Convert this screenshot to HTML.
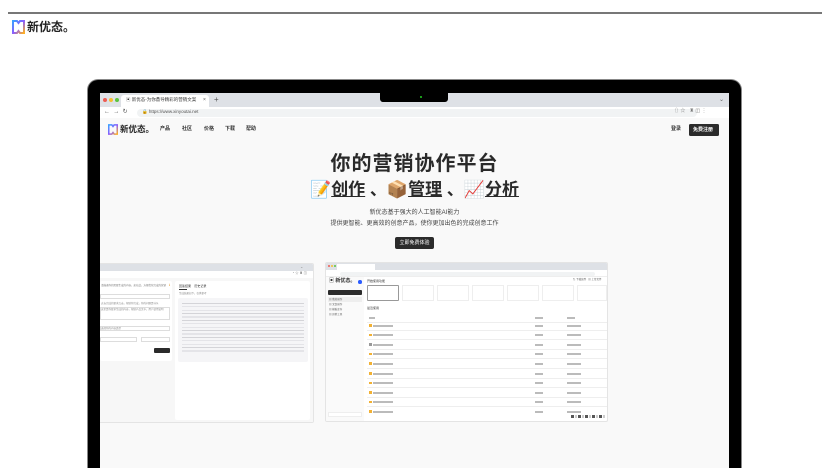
<!DOCTYPE html>
<html style="width:830px;height:468px;overflow:hidden"><head><meta charset="utf-8"><style>
*{margin:0;padding:0;box-sizing:border-box}
body{width:830px;height:468px;overflow:hidden;background:#fff;font-family:"Liberation Sans","Noto Sans CJK SC",sans-serif;position:relative;color:#222}
.a{position:absolute}
.t{position:absolute;white-space:nowrap;line-height:1}
.r{position:absolute;left:0;width:240px;height:9.6px;border-bottom:.5px solid #eee}
.r i{position:absolute;top:3.5px;height:2px;background:#bbb}
.r b{position:absolute;left:2px;top:3px;width:2.5px;height:2.5px;background:#f2b134}
</style></head><body>
<div class="a" style="left:8px;top:12px;width:814px;height:1.5px;background:#777"></div>
<svg class="a" style="left:12px;top:20px" width="13" height="14" viewBox="0 0 13 14"><defs><linearGradient id="g" x1="0" y1="0" x2="1" y2="1"><stop offset="0" stop-color="#3aa0ff"/><stop offset=".5" stop-color="#8a5cff"/><stop offset="1" stop-color="#ffb020"/></linearGradient></defs><path d="M1 1h4l1.5 2L8 1h4v12H8L6.5 11 5 13H1z" fill="none" stroke="url(#g)" stroke-width="2"/></svg>
<div class="t" style="left:27px;top:21px;font-size:12px;font-weight:bold;color:#222">新优态。</div>

<div class="a" style="left:87px;top:79px;width:655px;height:389px;background:#000;border-radius:11px 11px 0 0;border:1px solid #888;border-bottom:none"></div>
<div class="a" style="left:100px;top:93px;width:629px;height:375px;background:#f9f9f9;overflow:hidden">
  <div class="a" style="left:0;top:0;width:629px;height:14px;background:#dee1e6"></div>
  <div class="a" style="left:3px;top:5px;width:4px;height:4px;border-radius:50%;background:#ee5c54"></div>
  <div class="a" style="left:9px;top:5px;width:4px;height:4px;border-radius:50%;background:#f6be2f"></div>
  <div class="a" style="left:15px;top:5px;width:4px;height:4px;border-radius:50%;background:#5ac43f"></div>
  <div class="a" style="left:21px;top:2px;width:88px;height:12px;background:#fff;border-radius:3px 3px 0 0"></div>
  <div class="t" style="left:26px;top:5px;font-size:4.5px;color:#333">▣ 新优态-为你鼎导精彩的营销文案</div>
  <div class="t" style="left:103px;top:5px;font-size:5px;color:#555">×</div>
  <div class="t" style="left:114px;top:3px;font-size:8px;color:#555">+</div>
  <div class="t" style="left:619px;top:4px;font-size:6px;color:#666">⌄</div>
  <div class="a" style="left:280px;top:0;width:68px;height:9px;background:#000;border-radius:0 0 3px 3px"></div>
  <div class="a" style="left:320px;top:3px;width:2px;height:2px;border-radius:50%;background:#2c2"></div>
  <div class="a" style="left:0;top:14px;width:629px;height:11px;background:#fff"></div>
  <div class="t" style="left:4px;top:16px;font-size:6px;color:#555">←&nbsp; →&nbsp; ↻</div>
  <div class="a" style="left:37px;top:15.5px;width:560px;height:8px;background:#f1f3f4;border-radius:4px"></div>
  <div class="t" style="left:42px;top:17px;font-size:4.5px;color:#555">🔒 https://www.xinyoutai.net</div>
  <div class="t" style="left:574px;top:16px;font-size:5px;color:#777">⇧ ☆ &nbsp; ♜ ◫ ⋮</div>
  <svg class="a" style="left:8px;top:31px" width="10" height="11" viewBox="0 0 13 14"><path d="M1 1h4l1.5 2L8 1h4v12H8L6.5 11 5 13H1z" fill="none" stroke="url(#g)" stroke-width="2"/></svg>
  <div class="t" style="left:20px;top:32px;font-size:8.5px;font-weight:bold;color:#222">新优态。</div>
  <div class="t" style="left:60px;top:34px;font-size:5px;font-weight:bold;color:#333">产品</div>
  <div class="t" style="left:82px;top:34px;font-size:5px;font-weight:bold;color:#333">社区</div>
  <div class="t" style="left:104px;top:34px;font-size:5px;font-weight:bold;color:#333">价格</div>
  <div class="t" style="left:125px;top:34px;font-size:5px;font-weight:bold;color:#333">下载</div>
  <div class="t" style="left:146px;top:34px;font-size:5px;font-weight:bold;color:#333">帮助</div>
  <div class="t" style="left:571px;top:34px;font-size:5px;font-weight:bold;color:#333">登录</div>
  <div class="a" style="left:589px;top:31px;width:30px;height:12px;background:#2b2b2b;border-radius:1.5px"></div>
  <div class="t" style="left:593px;top:34.5px;font-size:5px;font-weight:bold;color:#fff">免费注册</div>
  <div class="t" style="left:0;width:629px;text-align:center;top:61px;font-size:20px;font-weight:bold;color:#2a2a2a;letter-spacing:1px">你的营销协作平台</div>
  <div class="t" style="left:0;width:629px;text-align:center;top:88px;font-size:17px;font-weight:bold;color:#2a2a2a">📝<u>创作</u> 、📦<u>管理</u> 、📈<u>分析</u></div>
  <div class="t" style="left:0;width:629px;text-align:center;top:117px;font-size:6px;color:#444">新优态基于强大的人工智能AI能力</div>
  <div class="t" style="left:0;width:629px;text-align:center;top:128px;font-size:6px;color:#444">提供更智能、更高效的创意产品，使你更加出色的完成创意工作</div>
  <div class="a" style="left:295px;top:144px;width:39px;height:12px;background:#2b2b2b;border-radius:2px"></div>
  <div class="t" style="left:295px;width:39px;text-align:center;top:147.5px;font-size:5px;color:#fff">立即免费体验</div>

  <div class="a" style="left:0;top:170px;width:214px;height:160px;background:#fff;border:1px solid #e4e4e4;border-left:none;border-radius:0 2px 2px 0;overflow:hidden">
    <div class="a" style="left:0;top:0;width:214px;height:7px;background:#dee1e6"></div>
    <div class="t" style="left:200px;top:1px;font-size:4px;color:#888">⌄</div>
    <div class="a" style="left:0;top:7px;width:214px;height:7px;background:#fff"></div>
    <div class="t" style="left:192px;top:8px;font-size:3.5px;color:#777">◔ ☆ ♜ ◫</div>
    <div class="a" style="left:0;top:14px;width:214px;height:146px;background:#f7f7f7"></div>
    <div class="a" style="left:0;top:17px;width:72px;height:80px;background:#fff;border-radius:2px"></div>
    <div class="t" style="left:1px;top:21px;font-size:2.5px;color:#777">请描述你的需要生成的内容，如在此，方便优化完成的营销</div>
    <div class="t" style="left:69px;top:20px;font-size:3px;color:#e9a23b">ℹ</div>
    <div class="a" style="left:0;top:30px;width:70px;height:5px;border:.5px solid #ddd"></div>
    <div class="t" style="left:1px;top:39px;font-size:2.5px;color:#888">过去完成的要求点击，帮助你完成，你的问题是什么</div>
    <div class="a" style="left:0;top:43px;width:70px;height:13px;border:.5px solid #ddd"></div>
    <div class="t" style="left:1px;top:45px;font-size:2.5px;color:#888">这里是你要求生成的内容，帮助产品文字，用户使用说明</div>
    <div class="a" style="left:0;top:62px;width:70px;height:5px;border:.5px solid #ddd"></div>
    <div class="t" style="left:1px;top:63.5px;font-size:2.5px;color:#888">选择你的内容类型</div>
    <div class="a" style="left:0;top:73px;width:37px;height:5px;border:.5px solid #ddd"></div>
    <div class="a" style="left:41px;top:73px;width:29px;height:5px;border:.5px solid #ddd"></div>
    <div class="a" style="left:54px;top:84px;width:16px;height:5px;background:#2b2b2b;border-radius:1px"></div>
    <div class="a" style="left:75px;top:17px;width:135px;height:139px;background:#fff;border-radius:2px"></div>
    <div class="t" style="left:79px;top:21px;font-size:3px;color:#333">回答结果 &nbsp;&nbsp; 历史记录</div>
    <div class="a" style="left:79px;top:25px;width:8px;height:.5px;background:#333"></div>
    <div class="t" style="left:79px;top:29px;font-size:2.5px;color:#888">生成结果如下，仅供参考</div>
    <div class="a" style="left:78px;top:34px;width:130px;height:64px;background:#f5f5f7;border-radius:2px"></div>
    <div class="a" style="left:82px;top:38px;width:122px;height:52px;background:repeating-linear-gradient(#f5f5f7 0 1px,#d4d4d8 1px 1.8px,#f5f5f7 1.8px 3.4px)"></div>
  </div>

  <div class="a" style="left:225px;top:169px;width:283px;height:160px;background:#fff;border:1px solid #e4e4e4;border-radius:2px;overflow:hidden">
    <div class="a" style="left:0;top:0;width:283px;height:7px;background:#dee1e6"></div>
    <div class="a" style="left:1.5px;top:2px;width:2px;height:2px;border-radius:50%;background:#ee5c54"></div>
    <div class="a" style="left:4.5px;top:2px;width:2px;height:2px;border-radius:50%;background:#f6be2f"></div>
    <div class="a" style="left:7.5px;top:2px;width:2px;height:2px;border-radius:50%;background:#5ac43f"></div>
    <div class="a" style="left:11px;top:1px;width:38px;height:6px;background:#fff"></div>
    <div class="a" style="left:0;top:7px;width:283px;height:7px;background:#fff;border-bottom:.5px solid #eee"></div>
    <div class="a" style="left:14px;top:8.5px;width:255px;height:4px;background:#f1f3f4;border-radius:2px"></div>
    <div class="a" style="left:0;top:14px;width:38px;height:146px;background:#fafafa"></div>
    <div class="t" style="left:3px;top:16px;font-size:5px;font-weight:bold;color:#333">▣ 新优态。</div>
    <div class="a" style="left:32px;top:17px;width:3.5px;height:3.5px;border-radius:50%;background:#2b5cff"></div>
    <div class="a" style="left:2px;top:27px;width:34px;height:5px;background:#2b2b2b;border-radius:1px"></div>
    <div class="a" style="left:2px;top:34px;width:34px;height:4.5px;background:#eee"></div>
    <div class="t" style="left:3px;top:35px;font-size:2.5px;color:#555;line-height:1.95">▤ 我的创作<br>▤ 文案创作<br>▤ 模板库存<br>▤ 其他工具</div>
    <div class="a" style="left:2px;top:149px;width:34px;height:5px;background:#fff;border:.5px solid #eee"></div>
    <div class="t" style="left:41px;top:17px;font-size:3px;color:#333">开始使用功能</div>
    <div class="t" style="left:247px;top:16px;font-size:2.5px;color:#555">⇅ 下载软件 &nbsp; ▤ 上传文件</div>
    <div class="a" style="left:41px;top:22px;width:32px;height:16px;border:1px solid #999;border-radius:1px"></div>
    <div class="a" style="left:76px;top:22px;width:32px;height:16px;border:.5px solid #eee"></div>
    <div class="a" style="left:111px;top:22px;width:32px;height:16px;border:.5px solid #eee"></div>
    <div class="a" style="left:146px;top:22px;width:32px;height:16px;border:.5px solid #eee"></div>
    <div class="a" style="left:181px;top:22px;width:32px;height:16px;border:.5px solid #eee"></div>
    <div class="a" style="left:216px;top:22px;width:32px;height:16px;border:.5px solid #eee"></div>
    <div class="a" style="left:251px;top:22px;width:30px;height:16px;border:.5px solid #eee"></div>
    <div class="t" style="left:41px;top:44px;font-size:3px;color:#333">最近使用</div>
    <div class="a" style="left:41px;top:50px;width:240px;height:100px">
      <div class="r" style="top:0"><i style="left:2px;width:6px"></i><i style="left:168px;width:8px"></i><i style="left:200px;width:8px"></i></div>
      <div class="r" style="top:8px"><b></b><i style="left:6px;width:20px"></i><i style="left:168px;width:8px"></i><i style="left:200px;width:14px"></i></div>
      <div class="r" style="top:17.6px"><b></b><i style="left:6px;width:20px"></i><i style="left:168px;width:8px"></i><i style="left:200px;width:14px"></i></div>
      <div class="r" style="top:27.2px"><b style="background:#999"></b><i style="left:6px;width:20px"></i><i style="left:168px;width:8px"></i><i style="left:200px;width:14px"></i></div>
      <div class="r" style="top:36.8px"><b></b><i style="left:6px;width:20px"></i><i style="left:168px;width:8px"></i><i style="left:200px;width:14px"></i></div>
      <div class="r" style="top:46.4px"><b></b><i style="left:6px;width:20px"></i><i style="left:168px;width:8px"></i><i style="left:200px;width:14px"></i></div>
      <div class="r" style="top:56px"><b></b><i style="left:6px;width:20px"></i><i style="left:168px;width:8px"></i><i style="left:200px;width:14px"></i></div>
      <div class="r" style="top:65.6px"><b></b><i style="left:6px;width:20px"></i><i style="left:168px;width:8px"></i><i style="left:200px;width:14px"></i></div>
      <div class="r" style="top:75.2px"><b></b><i style="left:6px;width:20px"></i><i style="left:168px;width:8px"></i><i style="left:200px;width:14px"></i></div>
      <div class="r" style="top:84.8px"><b></b><i style="left:6px;width:20px"></i><i style="left:168px;width:8px"></i><i style="left:200px;width:14px"></i></div>
      <div class="r" style="top:94.4px;border:none"><b></b><i style="left:6px;width:20px"></i><i style="left:168px;width:8px"></i><i style="left:200px;width:14px"></i></div>
    </div>
    <div class="a" style="left:245px;top:152px;width:34px;height:3px;background:repeating-linear-gradient(90deg,#555 0 3px,#fff 3px 4px,#ccc 4px 6px,#fff 6px 7px)"></div>
  </div>
</div>
</body></html>
